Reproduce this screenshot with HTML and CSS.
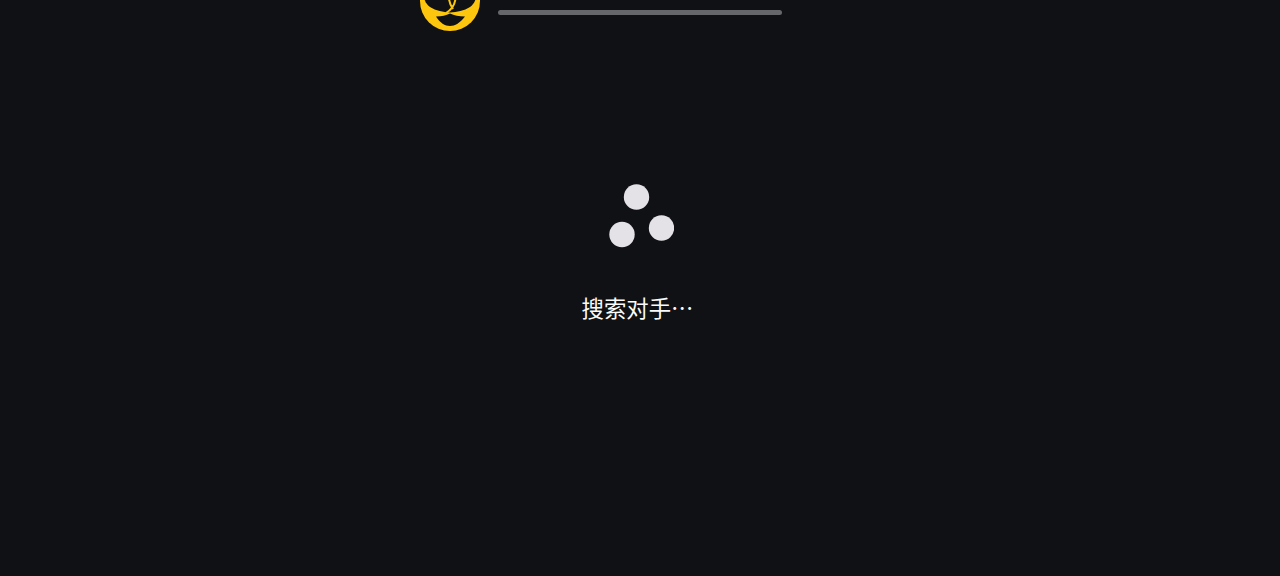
FILE: index.html
```html
<!DOCTYPE html>
<html lang="zh-CN">
<head>
    <meta charset="UTF-8">
    <title>搜索对手</title>
    <link rel="stylesheet" href="styles.css">
</head>
<body>
    <div class="header">
        <svg class="logo" width="60" height="60" viewBox="0 0 60 60">
            <circle cx="30" cy="30" r="30" fill="#fcc60f"/>
            <!-- upper cut-out -->
            <path d="M3.5 20 L56.5 20 C57 28 54 33 50 36 C44 40 37 41 30 41.5 C23 41 16 40 10 36 C6 33 3 28 3.5 20 Z" fill="#101114"/>
            <!-- leaf stem, two crossing strokes -->
            <path d="M26 42 C31 39 35 35 35.5 27 M29 27 C29 32 31 35 33 38" fill="none" stroke="#fcc60f" stroke-width="2"/>
            <!-- lower crescent -->
            <path d="M16 45.5 C22 45.5 26 44.5 30 42.5 C34 44.5 39 45.5 45 45.5 C40 52 35 55 30 55 C25 55 20 52 16 45.5 Z" fill="#101114"/>
        </svg>
        <div class="progress"></div>
    </div>

    <div class="searching">
        <svg class="spinner" width="66" height="64" viewBox="0 0 66 64">
            <circle cx="28.5" cy="13" r="12.7"/>
            <circle cx="53.5" cy="44" r="12.7"/>
            <circle cx="14" cy="50.5" r="12.7"/>
        </svg>
        <div class="status">搜索对手…</div>
    </div>
</body>
</html>
```

FILE: styles.css
```css
html, body {
    height: 100%;
}

body {
    margin: 0;
    overflow: hidden;
    background-color: #101114;
    font-family: "Noto Sans CJK SC", "Noto Sans", sans-serif;
}

.header {
    display: flex;
    align-items: flex-end;
    gap: 18px;
    height: 31px;
    padding-left: 420px;
}

.logo {
    flex: none;
}

.progress {
    width: 284px;
    height: 5px;
    margin-bottom: 16px;
    background-color: #66676b;
    border-radius: 2.5px;
}

.searching {
    display: flex;
    flex-direction: column;
    align-items: center;
    margin-top: 153px;
}

.spinner {
    display: block;
    margin-left: 1px;
    fill: #e4e2e6;
}

.status {
    margin-top: 43px;
    margin-right: 5px;
    color: #fafafa;
    font-size: 22.4px;
    line-height: 32px;
}
```
